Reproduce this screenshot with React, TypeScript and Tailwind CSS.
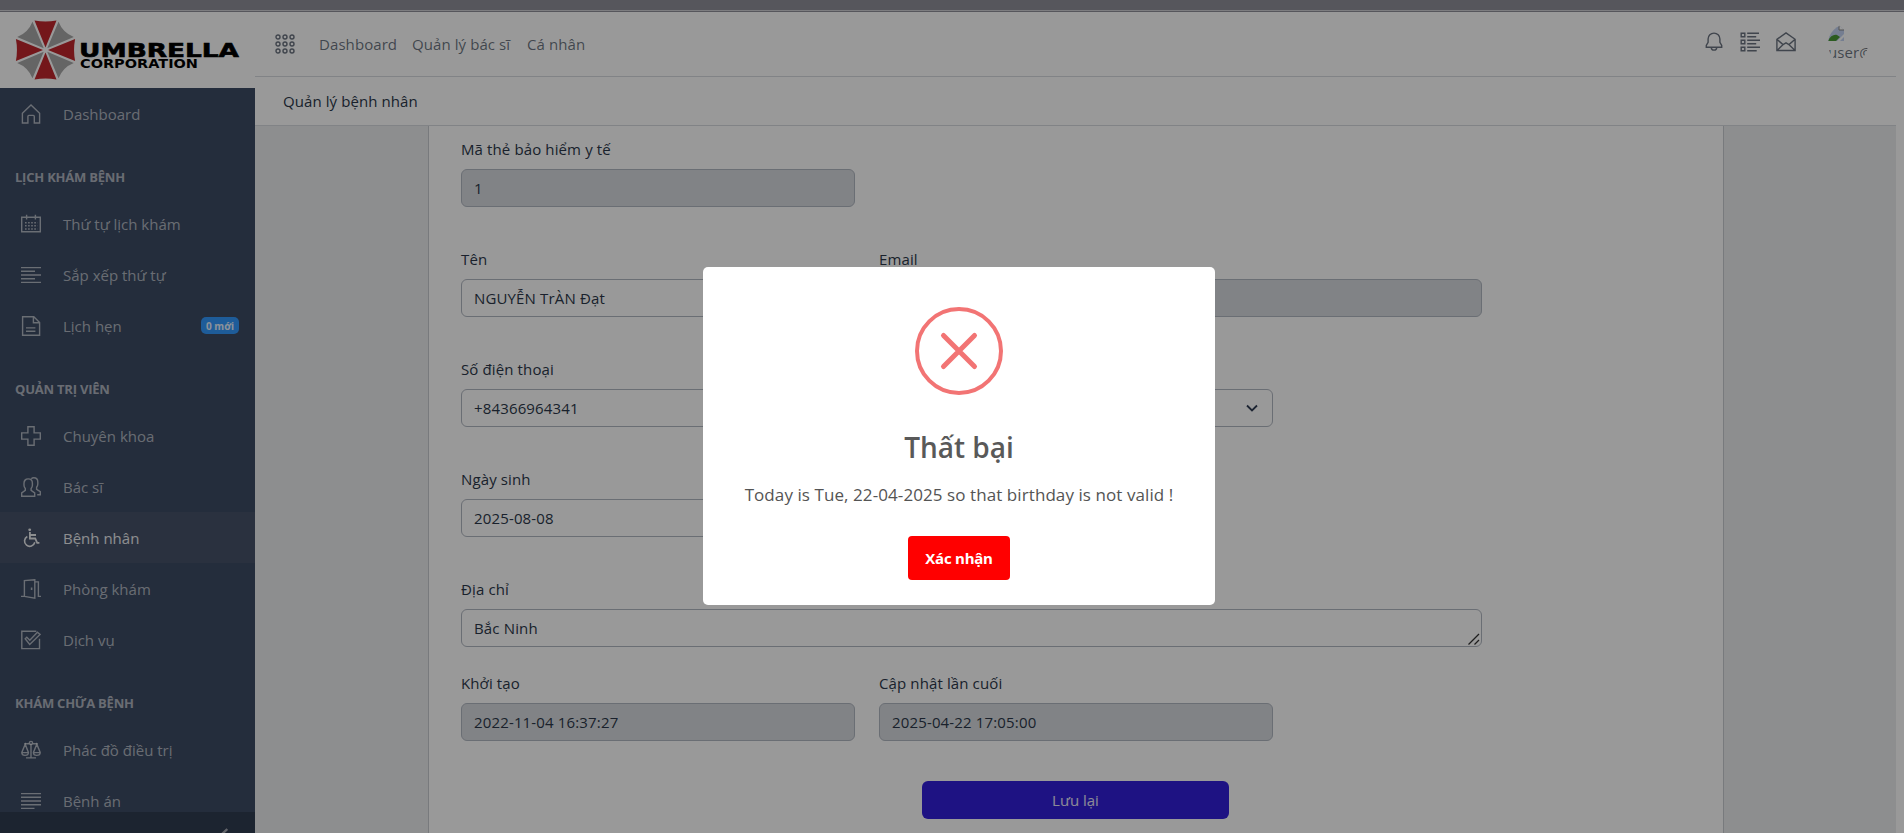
import React from "react";

type IconProps = { name: string; className?: string };

const stroke = { fill: "none", stroke: "currentColor", strokeWidth: 1.4 } as const;

function Icon({ name, className = "h-5 w-5" }: IconProps) {
  return (
    <svg viewBox="0 0 20 20" className={`shrink-0 ${className}`} {...stroke}>
      {name === "home" && <path d="M1.4 9.3 10 1l8.6 8.3V19h-5.3v-6.6a1 1 0 0 0-1-1H7.9a1 1 0 0 0-1 1V19H1.4Z" />}
      {name === "calendar" && (
        <>
          <path d="M.7 3.2h18.6v14.6H.7ZM5.6.8v4.6M14.4.8v4.6" />
          <path d="M4 8.7h12.6M4 11.8h12.6M4 14.9h12.6" strokeDasharray="1.6 1.5" strokeWidth="1.5" />
        </>
      )}
      {name === "left" && <path d="M0 2.6h20M0 6.3h14M0 10h20M0 13.7h14M0 17.4h20" />}
      {name === "file" && (
        <>
          <path d="M1.6.7h11.2l5.8 5.8v12.8H1.6ZM12.4.7v6h6" />
          <path d="M5 11.9h9.4M5 15.2h9.4" />
        </>
      )}
      {name === "cross" && <path d="M6.9.7h6.2v6.2h6.2v6.2h-6.2v6.2H6.9v-6.2H.7V6.9h6.2Z" />}
      {name === "people" && (
        <>
          <path d="M.7 19.3h13v-3.4l-3.6-2.5v-1.8c.9-.9 1.3-2 1.3-3.3V6.2c0-2.4-1.7-4.3-4.2-4.3S3 3.8 3 6.2v2.1c0 1.3.4 2.4 1.3 3.3v1.8L.7 15.9Z" />
          <path d="M10.3 1.8c.6-.6 1.500-1 2.500-1 2.400 0 4 1.800 4 4.200v2c0 1.300-.4 2.400-1.200 3.300v2l3.700 2.400v3h-3.100" />
        </>
      )}
      {name === "wheelchair" && (
        <>
          <circle cx="8.7" cy="1.8" r="1.4" fill="currentColor" stroke="none" />
          <path d="M8.9 4v6.500h5.300l2 4.400h2.200M9 7h6" strokeWidth="1.8" />
          <path d="M6.300 8.500a5.200 5.200 0 1 0 7.500 5.800" strokeWidth="1.6" />
        </>
      )}
      {name === "door" && (
        <>
          <path d="M0 17.400h3.400V1.600L13.800.7v18.400L3.400 17.400M13.800 2.900h3.600v14.500H20" />
          <path d="M10.600 8.500v2.500" strokeWidth="1.6" />
        </>
      )}
      {name === "check" && (
        <>
          <path d="M18.500 8.800v9.800H.8V1.200h14.500" />
          <path d="m4.200 8.800 1.600-1.500 3 3 7.600-8.100L19 4.400l-10.300 10Z" />
        </>
      )}
      {name === "balance" && (
        <>
          <path d="M10 3.500v14.200M5 17.900h10M3.300 3.700h4.900M11.800 3.700h4.900" />
          <circle cx="10" cy="3" r="1.600" />
          <path d="M4.200 4.200.8 12.500c0 1.800 1.300 2.900 3.200 2.900s3.400-1.100 3.400-2.900ZM.8 12.600h6.600M15.800 4.200l-3.400 8.300c0 1.800 1.300 2.900 3.300 2.900s3.500-1.100 3.500-2.900ZM12.400 12.600h6.800" />
        </>
      )}
      {name === "justify" && <path d="M0 2.600h20M0 6.300h20M0 10h20M0 13.700h20M0 17.400h13.500" />}
      {name === "apps" &&
        [3, 10, 17].map((y) => [3, 10, 17].map((x) => <circle key={`${x}-${y}`} cx={x} cy={y} r="2" />))}
      {name === "bell" && (
        <path d="M2.300 15.200h15.400v-1.800l-1.800-3V7A5.900 5.900 0 0 0 4.100 7v3.400l-1.800 3ZM7.300 15.400a2.700 2.700 0 0 0 5.400 0" />
      )}
      {name === "list" && (
        <>
          <path d="M1.200 1.200h3.600v3.600H1.200ZM1.200 8.200h3.600v3.600H1.200ZM1.200 15.200h3.600v3.600H1.200Z" />
          <path d="M7.200 1.300H19M7.200 4.700h9M7.200 8.300H20M7.200 11.700h9M7.200 15.300H20M7.200 18.700h9.500" />
        </>
      )}
      {name === "mail" && (
        <path d="M.9 7.300 10 .9l9.100 6.400v11.200H.9ZM.9 7.300 7 12.600 10 10.900l3 1.700 6.100-5.300M.9 18.500 7.200 12.600M19.100 18.500l-6.300-5.900" />
      )}
    </svg>
  );
}

function Logo() {
  return (
    <svg viewBox="0 0 255 76" className="h-[76px] w-[255px]">
      <g transform="translate(45.500 38)">
        {[0, 90, 180, 270].map((a) => (
          <g key={a} transform={`rotate(${a})`}>
            <path d="M0-2.500-11-29.600Q0-27.500 11-29.600Z" fill="#c1272d" />
            <path d="M0-2.500-10.800-29.200Q0-24.500 10.800-29.200Z" fill="#a8a8a8" transform="rotate(45)" />
          </g>
        ))}
      </g>
      <text x="79" y="44.800" fontFamily="DejaVu Sans" fontWeight="700" fontSize="20" textLength="160" lengthAdjust="spacingAndGlyphs" stroke="#000" strokeWidth=".6">
        UMBRELLA
      </text>
      <text x="80" y="56" fontFamily="DejaVu Sans" fontWeight="700" fontSize="11.500" textLength="118" lengthAdjust="spacingAndGlyphs">
        CORPORATION
      </text>
    </svg>
  );
}

function NavItem({ icon, label, active, badge }: { icon: string; label: string; active?: boolean; badge?: string }) {
  return (
    <a
      className={`flex h-[51.02px] shrink-0 items-center pr-4 pl-[21px] ${
        active ? "bg-[#46526a] text-white/90" : "text-white/60"
      }`}
    >
      <Icon name={icon} />
      <span className="ml-[22px] flex-1">{label}</span>
      {badge && (
        <span className="flex h-[17px] w-[38px] items-center justify-center rounded-[5px] bg-[#3399ff] text-[10px] font-bold text-white/90">
          {badge}
        </span>
      )}
    </a>
  );
}

function NavTitle({ children }: { children: React.ReactNode }) {
  return (
    <div className="mt-4 h-[43.2px] shrink-0 px-[15px] pt-[12.5px] text-[13px] leading-[19.2px] font-bold tracking-[-0.22px] text-white/60 uppercase">
      {children}
    </div>
  );
}

function Field({
  label,
  value,
  disabled,
  span = "col-span-4",
  children,
}: {
  label: string;
  value: string;
  disabled?: boolean;
  span?: string;
  children?: React.ReactNode;
}) {
  return (
    <div className={span}>
      <div className="mb-2 h-6 tracking-[0.12px]">{label}</div>
      <div
        className={`relative flex h-[38px] items-center justify-between rounded-md border border-[#b1b7c1] px-3 tracking-[0.15px] ${
          disabled ? "bg-[#d8dbe0]" : "bg-white"
        }`}
      >
        <span>{value}</span>
        {children}
      </div>
    </div>
  );
}

function Sidebar() {
  return (
    <aside className="flex h-full w-[255px] shrink-0 flex-col bg-[#3c4b64]">
      <div className="h-[76px] shrink-0 bg-white">
        <Logo />
      </div>
      <nav className="flex min-h-0 flex-1 flex-col overflow-hidden">
        <NavItem icon="home" label="Dashboard" />
        <NavTitle>Lịch khám bệnh</NavTitle>
        <NavItem icon="calendar" label="Thứ tự lịch khám" />
        <NavItem icon="left" label="Sắp xếp thứ tự" />
        <NavItem icon="file" label="Lịch hẹn" badge="0 mới" />
        <NavTitle>Quản trị viên</NavTitle>
        <NavItem icon="cross" label="Chuyên khoa" />
        <NavItem icon="people" label="Bác sĩ" />
        <NavItem icon="wheelchair" label="Bệnh nhân" active />
        <NavItem icon="door" label="Phòng khám" />
        <NavItem icon="check" label="Dịch vụ" />
        <NavTitle>Khám chữa bệnh</NavTitle>
        <NavItem icon="balance" label="Phác đồ điều trị" />
        <NavItem icon="justify" label="Bệnh án" />
      </nav>
      <div className="flex h-[21px] shrink-0 justify-end overflow-hidden bg-[#303c50] pt-4 pr-[27px]">
        <svg viewBox="0 0 8 14" className="h-[14px] w-2 text-[#a5a9b1]" fill="none" stroke="currentColor" strokeWidth="2.400">
          <path d="M7.300 1 1 7l6.300 6" />
        </svg>
      </div>
    </aside>
  );
}

function Header() {
  return (
    <header className="shrink-0 bg-white">
      <div className="flex h-[65px] items-center border-b border-[#d8dbe0] pl-5 tracking-[0.08px] text-[#2c384a]/70">
        <Icon name="apps" />
        <span className="ml-6 w-[93px]">Dashboard</span>
        <span className="w-[115px]">Quản lý bác sĩ</span>
        <span>Cá nhân</span>
        <div className="ml-auto flex h-full items-start pr-7">
          <Icon name="bell" className="mt-5 h-5 w-5" />
          <Icon name="list" className="mt-5 ml-4 h-5 w-5" />
          <Icon name="mail" className="mt-5 ml-4 h-5 w-5" />
          <div className="mt-3 ml-8 h-10 w-10 overflow-hidden rounded-full">
            <svg viewBox="0 0 16 16" className="mt-px h-4 w-4">
              <path d="M0 0h11l5 5v11H0Z" fill="#c3d3f2" />
              <path d="M11 0v5h5" fill="#fff" stroke="#8a8a8a" />
              <path d="M0 16c2-5 6-7 9-6l3 2-4 4Z" fill="#4a9a38" />
              <path d="m9 16 7-7v3l-4 4Z" fill="#fff" />
            </svg>
            <span className="block leading-[22px]">user@</span>
          </div>
        </div>
      </div>
      <div className="flex h-[49px] items-center border-b border-[#d8dbe0] pl-7 tracking-[0.08px]">Quản lý bệnh nhân</div>
    </header>
  );
}

function PatientForm() {
  return (
    <main className="flex min-h-0 flex-1 overflow-hidden bg-[#ebedef] pl-[173px]">
      <div className="h-full w-[1296px] border-x border-[#c8cbd0] bg-white pt-[11px] pl-[20px]">
        <div className="w-[1254px]">
          <div className="mb-10 grid grid-cols-12 [&>*]:px-3">
            <Field label="Mã thẻ bảo hiểm y tế" value="1" disabled />
          </div>
          <div className="mb-10 grid grid-cols-12 [&>*]:px-3">
            <Field label="Tên" value="NGUYỄN TrÀN Đạt" />
            <Field label="Email" value="" disabled span="col-span-6" />
          </div>
          <div className="mb-10 grid grid-cols-12 [&>*]:px-3">
            <Field label="Số điện thoại" value="+84366964341" />
            <Field label="" value="">
              <svg viewBox="0 0 16 16" className="h-4 w-4" fill="none" stroke="#303c54" strokeWidth="1.800">
                <path d="m3 5.500 5 5 5-5" />
              </svg>
            </Field>
          </div>
          <div className="mb-10 grid grid-cols-12 [&>*]:px-3">
            <Field label="Ngày sinh" value="2025-08-08" />
          </div>
          <div className="mb-6 grid grid-cols-12 [&>*]:px-3">
            <Field label="Địa chỉ" value="Bắc Ninh" span="col-span-10">
              <svg viewBox="0 0 12 12" className="absolute right-px bottom-px h-3 w-3" stroke="#333" strokeWidth="1.300">
                <path d="M.5 11.500 11 1M6.500 11.500 11 7" />
              </svg>
            </Field>
          </div>
          <div className="mb-10 grid grid-cols-12 [&>*]:px-3">
            <Field label="Khởi tạo" value="2022-11-04 16:37:27" disabled />
            <Field label="Cập nhật lần cuối" value="2025-04-22 17:05:00" disabled />
          </div>
          <div className="flex justify-center pr-px">
            <button className="h-[38px] w-[307px] rounded-md bg-[#321fdb] text-white/90">Lưu lại</button>
          </div>
        </div>
      </div>
    </main>
  );
}

function Alert() {
  return (
    <div className="fixed inset-0 flex items-start justify-center bg-black/40 pl-[14px]">
      <div className="mt-[267px] flex h-[338px] w-[512px] flex-col items-center rounded-[5px] bg-white pt-10">
        <svg viewBox="0 0 88 88" className="h-[88px] w-[88px]" fill="none" stroke="#f27474" strokeWidth="4">
          <circle cx="44" cy="44" r="42" />
          <path d="m28.500 28.500 31 31m0-31-31 31" strokeWidth="5" strokeLinecap="round" />
        </svg>
        <h2 className="mt-8 text-[28px] leading-10 font-semibold text-[#595959]">Thất bại</h2>
        <p className="mt-[14px] text-[17px] leading-7 tracking-[0.08px] text-[#545454]">
          Today is Tue, 22-04-2025 so that birthday is not valid !
        </p>
        <button className="mt-[27px] h-11 w-[102px] rounded bg-[#ff0000] text-[15px] font-bold tracking-[-0.25px] text-white">
          Xác nhận
        </button>
      </div>
    </div>
  );
}

export default function App() {
  return (
    <div className="flex h-[833px] w-[1904px] flex-col overflow-hidden bg-white font-['Open_Sans','Noto_Sans',sans-serif] text-[15px] leading-6 text-[#2c384a]">
      <div className="h-3 shrink-0 border-b border-[#8f9099] bg-[#8f9099] pt-[10px]">
        <div className="h-px bg-[#d0d1d6]" />
      </div>
      <div className="flex min-h-0 w-[1896px] flex-1">
        <Sidebar />
        <div className="flex min-w-0 flex-1 flex-col">
          <Header />
          <PatientForm />
        </div>
      </div>
      <Alert />
    </div>
  );
}
